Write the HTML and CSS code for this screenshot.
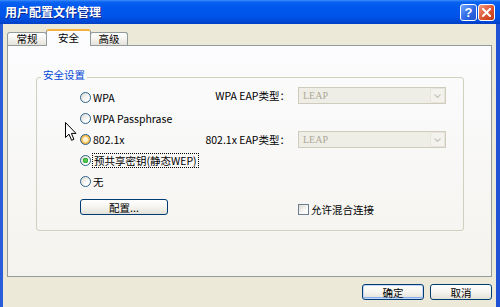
FILE: index.html
```html
<!DOCTYPE html>
<html lang="zh-CN">
<head>
<meta charset="UTF-8">
<title>用户配置文件管理</title>
<link rel="stylesheet" href="styles.css">
</head>
<body>
<div class="window">
  <div class="titlebar">
    <span class="title">用户配置文件管理</span>
    <div class="caption-buttons">
      <span class="cap-btn help">?</span>
      <span class="cap-btn close">
        <svg width="9" height="9" viewBox="0 0 9 9"><path d="M1 1 L8 8 M8 1 L1 8" stroke="#fff" stroke-width="2" stroke-linecap="square"/></svg>
      </span>
    </div>
  </div>

  <div class="client">
    <div class="tabs">
      <span class="tab tab-general">常规</span>
      <span class="tab tab-security active">安全</span>
      <span class="tab tab-advanced">高级</span>
    </div>

    <div class="panel">
      <fieldset class="group">
        <legend>安全设置</legend>
        <div class="group-body">
          <div class="radio-list">
            <label class="radio"><span class="radio-dot"></span>WPA</label>
            <label class="radio"><span class="radio-dot"></span>WPA Passphrase</label>
            <label class="radio"><span class="radio-dot hover"></span>802.1x</label>
            <label class="radio"><span class="radio-dot checked"></span><span class="focus">预共享密钥(静态WEP)</span></label>
            <label class="radio"><span class="radio-dot"></span>无</label>
            <button class="btn config">配置...</button>
          </div>

          <div class="eap-settings">
            <div class="field">
              <span class="field-label">WPA EAP类型：</span>
              <span class="combo">LEAP
                <span class="combo-arrow"><svg width="7" height="4" viewBox="0 0 7 4"><path d="M0.5 0.5 L3.5 3.5 L6.5 0.5" fill="none" stroke="#C8C6BC" stroke-width="1.2"/></svg></span>
              </span>
            </div>
            <div class="field second">
              <span class="field-label">802.1x EAP类型：</span>
              <span class="combo">LEAP
                <span class="combo-arrow"><svg width="7" height="4" viewBox="0 0 7 4"><path d="M0.5 0.5 L3.5 3.5 L6.5 0.5" fill="none" stroke="#C8C6BC" stroke-width="1.2"/></svg></span>
              </span>
            </div>
            <label class="check"><span class="check-box"></span>允许混合连接</label>
          </div>
        </div>
      </fieldset>
    </div>

    <div class="actions">
      <button class="btn default">确定</button>
      <button class="btn">取消</button>
    </div>
  </div>

  <!-- mouse pointer hovering the 802.1x option -->
  <svg class="cursor" width="13" height="20" viewBox="0 0 13 20">
    <path d="M0.5 0.5 L0.5 15.5 L4 12.2 L6.6 18.3 L8.9 17.3 L6.4 11.4 L11 11.4 Z" fill="#fff" stroke="#000" stroke-width="1" stroke-linejoin="round"/>
  </svg>
</div>
</body>
</html>
```

FILE: styles.css
```css
* {
  box-sizing: border-box;
}
body {
  margin: 0;
  font-family: "Noto Sans CJK SC", "Liberation Sans", sans-serif;
  font-size: 10.5px;
  color: #000;
  background-color: #ECE9D8;
}
.window {
  position: relative;
  width: 500px;
  height: 307px;
  overflow: hidden;
}

/* title bar */
.titlebar {
  height: 24px;
  display: flex;
  align-items: center;
  justify-content: space-between;
  padding: 0 5px;
  background: linear-gradient(#3D8DFB 0, #0A62F0 2px, #0058EE 7px, #0054E8 16px, #0049D8 21px, #003FC4 24px);
  color: #fff;
}
.title {
  font-size: 12px;
  font-weight: bold;
  line-height: 14px;
  text-shadow: 1px 1px #0C2590;
}
.caption-buttons {
  display: flex;
  gap: 1px;
  margin-top: 1px;
}
.cap-btn {
  width: 17px;
  height: 17px;
  border: 1px solid #fff;
  border-radius: 3px;
  display: flex;
  align-items: center;
  justify-content: center;
}
.help {
  background: linear-gradient(135deg, #6FA6FF, #2E68E6 55%, #1F52CC);
  color: #fff;
  font: bold 13px "Liberation Sans", sans-serif;
}
.close {
  background: linear-gradient(135deg, #F29A7E, #DC5432 55%, #BD3B17);
}

/* client area */
.client {
  height: 283px;
  border-left: 3px solid #2A5DD9;
  border-right: 4px solid #1F52D4;
  padding: 5px 0 0 4px;
}
.tabs {
  display: flex;
  align-items: flex-end;
  height: 16px;
  position: relative;
  z-index: 1;
}
.tab {
  height: 13px;
  border: 1px solid #919B9C;
  border-bottom: none;
  border-radius: 3px 3px 0 0;
  background: linear-gradient(#FFFFFF, #F4F3EF 50%, #E4E2DA);
  line-height: 12px;
  text-align: center;
}
.tab-general {
  width: 40px;
}
.tab-security {
  width: 45px;
  margin-left: -1px;
}
.tab-advanced {
  width: 38px;
  margin-left: -1px;
}
.tab.active {
  height: 17px;
  margin-bottom: -1px;
  border-top: 2px solid #F6B33F;
  background: #FCFCFE;
  line-height: 14px;
}
.panel {
  width: 485px;
  height: 232px;
  border: 1px solid #919B9C;
  background: linear-gradient(#FCFCFE, #F4F3EE);
}

/* group box */
.group {
  width: 428px;
  height: 162px;
  margin: 23px 0 0 28px;
  padding: 1px 0 0 0;
  border: 1px solid #D0D0BF;
  border-radius: 3px;
}
.group legend {
  margin-left: 4px;
  padding: 0 2px 5px;
  line-height: 12px;
  color: #0046D5;
}
.group-body {
  display: flex;
  padding-left: 43px;
}
.radio-list {
  width: 120px;
  display: flex;
  flex-direction: column;
  align-items: flex-start;
}
.radio {
  height: 21px;
  display: flex;
  align-items: center;
  gap: 2px;
  white-space: nowrap;
}
.radio-dot {
  width: 11px;
  height: 11px;
  border: 1px solid #2C628B;
  border-radius: 50%;
  background: linear-gradient(135deg, #DCDBD3, #FFFFFF 75%);
}
.radio-dot.hover {
  background: radial-gradient(circle, #FFF3D2 0 2px, #F9CF73 3px, #E9A62E 5px);
}
.radio-dot.checked {
  background: radial-gradient(circle, #55C655 0 1.5px, #21A121 2.5px, transparent 3px),
              linear-gradient(135deg, #DCDBD3, #FFFFFF 75%);
}
.focus {
  outline: 1px dotted #000;
  padding: 0 1px;
  line-height: 13px;
}

/* EAP type fields */
.eap-settings {
  display: flex;
  flex-direction: column;
}
.field {
  display: flex;
  align-items: center;
}
.field.second {
  margin-top: 27px;
}
.field-label {
  width: 98px;
  padding-right: 8px;
  text-align: right;
  white-space: nowrap;
}
.combo {
  width: 148px;
  height: 17px;
  display: flex;
  align-items: center;
  justify-content: space-between;
  padding-left: 4px;
  border: 1px solid #CFCCBE;
  background: #EFEEE6;
  color: #ACA899;
  font-family: "Liberation Serif", serif;
  font-size: 10px;
}
.combo-arrow {
  width: 15px;
  height: 15px;
  display: flex;
  align-items: center;
  justify-content: center;
  border: 1px solid #E8E6DC;
  border-radius: 2px;
  background: #F3F2EC;
}
.check {
  display: flex;
  align-items: center;
  gap: 2px;
  height: 13px;
  margin: 55px 0 0 98px;
}
.check-box {
  width: 11px;
  height: 11px;
  border: 1px solid #6E7E90;
  background: linear-gradient(135deg, #DCDBD3, #FFFFFF 75%);
}

/* push buttons */
.btn {
  height: 16px;
  padding: 0;
  border: 1px solid #003C74;
  border-radius: 3px;
  background: linear-gradient(#FFFFFF, #F5F4F0 50%, #E2E0D7);
  font: inherit;
  color: #000;
}
.btn.config {
  width: 88px;
  margin-top: 7px;
}
.btn.default {
  box-shadow: inset 0 0 0 1px #C2D6F7, inset 0 -1px 0 1px #8DAEEA;
}
.actions {
  display: flex;
  justify-content: flex-end;
  gap: 6px;
  margin-top: 7px;
  padding-right: 4px;
}
.actions .btn {
  width: 62px;
}

.cursor {
  position: absolute;
  left: 65px;
  top: 122px;
}
```
